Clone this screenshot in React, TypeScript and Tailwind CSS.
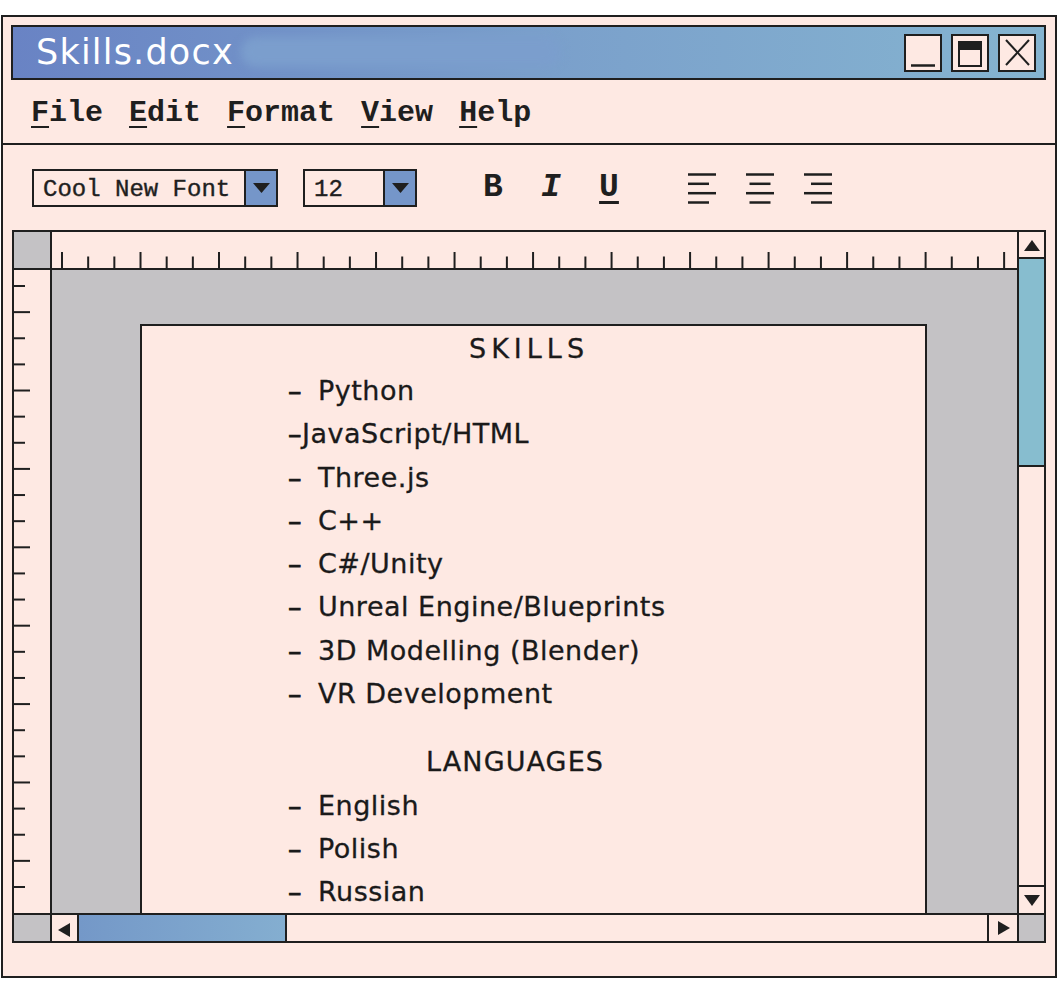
const ink = "#1f1f1f";

const skills = [
  "– Python",
  "–JavaScript/HTML",
  "– Three.js",
  "– C++",
  "– C#/Unity",
  "– Unreal Engine/Blueprints",
  "– 3D Modelling (Blender)",
  "– VR Development",
];

const languages = ["– English", "– Polish", "– Russian"];

const menu = ["File", "Edit", "Format", "View", "Help"];

function Arrow({ dir, className }: { dir: "up" | "down" | "left" | "right"; className?: string }) {
  const pts = {
    up: "0,11 8,0 16,11",
    down: "0,0 16,0 8,11",
    left: "12,0 12,14 0,7",
    right: "0,0 12,7 0,14",
  }[dir];
  const size = dir === "up" || dir === "down" ? { w: 16, h: 11 } : { w: 12, h: 14 };
  return (
    <svg width={size.w} height={size.h} viewBox={`0 0 ${size.w} ${size.h}`} className={className}>
      <polygon points={pts} fill={ink} />
    </svg>
  );
}

function AlignIcon({ kind }: { kind: "left" | "center" | "right" }) {
  const ys = [1.5, 10.8, 20.2, 29.5];
  const short = (y: number, i: number) => {
    if (i % 2 === 0) return <line key={y} x1="0" y1={y} x2="28" y2={y} />;
    if (kind === "left") return <line key={y} x1="0" y1={y} x2="21" y2={y} />;
    if (kind === "center") return <line key={y} x1="3.5" y1={y} x2="24.5" y2={y} />;
    return <line key={y} x1="7" y1={y} x2="28" y2={y} />;
  };
  return (
    <svg width="28" height="31" viewBox="0 0 28 31" stroke={ink} strokeWidth="2.5">
      {ys.map((y, i) => short(y, i))}
    </svg>
  );
}

function HRuler() {
  const ticks = Array.from({ length: 37 }, (_, i) => i);
  return (
    <svg width="965" height="36" viewBox="0 0 965 36">
      {ticks.map((i) => {
        const x = 10 + i * 26.17;
        const long = i % 3 === 0;
        return <line key={i} x1={x} y1={long ? 20 : 24.5} x2={x} y2={36} stroke={ink} strokeWidth="2" />;
      })}
    </svg>
  );
}

function VRuler() {
  const ticks = Array.from({ length: 24 }, (_, i) => i);
  return (
    <svg width="36" height="643" viewBox="0 0 36 643">
      {ticks.map((i) => {
        const y = 16 + i * 26.13;
        const long = i % 3 === 1;
        return <line key={i} x1={0} y1={y} x2={long ? 16 : 11} y2={y} stroke={ink} strokeWidth="2" />;
      })}
    </svg>
  );
}

function Select({ value, width }: { value: string; width: string }) {
  return (
    <div className={`flex h-[38px] border-2 border-[#1f1f1f] bg-[#fee9e3] ${width}`}>
      <div className="flex flex-1 items-center pl-[9px] pt-[4px] font-['Liberation_Mono',monospace] text-[24px] text-[#1f1f1f] [-webkit-text-stroke:0.4px_#1f1f1f]">
        {value}
      </div>
      <div className="flex w-[32px] items-center justify-center border-l-2 border-[#1f1f1f] bg-[#7596c9]">
        <svg width="17" height="10" viewBox="0 0 17 10">
          <polygon points="0,0 17,0 8.5,10" fill={ink} />
        </svg>
      </div>
    </div>
  );
}

function Line({ text }: { text: string }) {
  const spaced = text[1] === " ";
  return (
    <div className="leading-[43.3px]">
      <span className={`inline-block [-webkit-text-stroke:0.8px_#1a1a1a] ${spaced ? "w-[30px]" : ""}`}>{text[0]}</span>
      {text.slice(spaced ? 2 : 1)}
    </div>
  );
}

export default function App() {
  return (
    <div className="h-[983px] w-[1059px] overflow-hidden bg-white pt-[15px] pl-[1px]">
      <div className="flex h-[963px] w-[1056px] flex-col border-2 border-[#1f1f1f] bg-[#fee9e3]">
        {/* title bar */}
        <div className="relative mt-[8px] ml-[8px] mr-[9px] flex h-[55px] shrink-0 items-center border-2 border-[#1f1f1f] bg-linear-to-r from-[#6983c4] via-[#7a9fcb] to-[#85b4d0]">
          <div className="absolute left-[228px] top-[10px] h-[30px] w-[320px] rounded-full bg-[#7b9ecd] blur-[4px]" />
          <span className="relative pl-[23px] font-['DejaVu_Sans',sans-serif] text-[35px] leading-none tracking-[1.2px] text-white">
            Skills.docx
          </span>
          <div className="ml-auto mr-[8px] flex gap-[9px]">
            <div className="h-[38px] w-[38px] border-2 border-[#1f1f1f] bg-[#fee9e3]">
              <svg width="34" height="34" viewBox="0 0 34 34">
                <line x1="5" y1="29.5" x2="29" y2="29.5" stroke={ink} strokeWidth="2.5" />
              </svg>
            </div>
            <div className="h-[38px] w-[38px] border-2 border-[#1f1f1f] bg-[#fee9e3]">
              <svg width="34" height="34" viewBox="0 0 34 34">
                <rect x="6" y="6" width="22" height="24" fill="none" stroke={ink} strokeWidth="2" />
                <rect x="6" y="6" width="22" height="8" fill={ink} />
              </svg>
            </div>
            <div className="h-[38px] w-[38px] border-2 border-[#1f1f1f] bg-[#fee9e3]">
              <svg width="34" height="34" viewBox="0 0 34 34">
                <line x1="6" y1="4" x2="29" y2="29" stroke={ink} strokeWidth="2" />
                <line x1="29" y1="4" x2="6" y2="29" stroke={ink} strokeWidth="2" />
              </svg>
            </div>
          </div>
        </div>

        {/* menu */}
        <div className="flex h-[65px] shrink-0 items-center gap-[26px] border-b-2 border-[#1f1f1f] pl-[28px] pt-[3px] font-['Liberation_Mono',monospace] text-[30px] font-bold text-[#1f1f1f]">
          {menu.map((m) => (
            <span key={m}>
              <span className="underline decoration-2 underline-offset-[5px]">{m[0]}</span>
              {m.slice(1)}
            </span>
          ))}
        </div>

        {/* toolbar */}
        <div className="flex h-[85px] shrink-0 items-center pl-[29px] font-['Liberation_Mono',monospace] text-[#1f1f1f]">
          <Select value="Cool New Font" width="w-[246px]" />
          <div className="ml-[25px]">
            <Select value="12" width="w-[114px]" />
          </div>
          <span className="ml-[61px] w-[30px] text-center text-[33px] font-bold leading-none">B</span>
          <span className="ml-[28px] w-[30px] text-center text-[33px] font-bold italic leading-none">I</span>
          <span className="ml-[28px] w-[30px] text-center text-[33px] font-bold leading-none underline decoration-[2.5px] underline-offset-[5px]">
            U
          </span>
          <div className="ml-[64px] mt-[2px]">
            <AlignIcon kind="left" />
          </div>
          <div className="ml-[30px] mt-[2px]">
            <AlignIcon kind="center" />
          </div>
          <div className="ml-[30px] mt-[2px]">
            <AlignIcon kind="right" />
          </div>
        </div>

        {/* editor */}
        <div className="mx-[9px] grid h-[713px] shrink-0 grid-cols-[36px_965px_25px] grid-rows-[36px_643px_26px] gap-[2px] border-2 border-[#1f1f1f] bg-[#1f1f1f]">
          <div className="bg-[#c4c2c5]" />
          <div className="bg-[#fee9e3]">
            <HRuler />
          </div>
          <div className="row-span-2 flex flex-col gap-[2px] bg-[#1f1f1f]">
            <div className="flex h-[25px] items-start justify-center bg-[#fee9e3] pt-[8px]">
              <Arrow dir="up" />
            </div>
            <div className="h-[206px] bg-[#87bdcf]" />
            <div className="flex-1 bg-[#fee9e3]" />
            <div className="flex h-[26px] items-start justify-center bg-[#fee9e3] pt-[8px]">
              <Arrow dir="down" />
            </div>
          </div>
          <div className="bg-[#fee9e3]">
            <VRuler />
          </div>
          <div className="overflow-hidden bg-[#c4c2c5] pl-[88px] pr-[90px] pt-[54px]">
            <div className="h-[640px] border-2 border-[#1f1f1f] bg-[#fee9e3] pl-[146px] pt-[3px] font-['DejaVu_Sans',sans-serif] text-[27px] tracking-[0.5px] text-[#1a1a1a] [-webkit-text-stroke:0.3px_#1a1a1a]">
              <div className="ml-[181px] leading-[40px] tracking-[5px]">SKILLS</div>
              {skills.map((s) => (
                <Line key={s} text={s} />
              ))}
              <div className="mt-[25px] ml-[138px] leading-[43.3px] tracking-[1.1px]">LANGUAGES</div>
              {languages.map((s) => (
                <Line key={s} text={s} />
              ))}
            </div>
          </div>
          <div className="bg-[#c4c2c5]" />
          <div className="flex gap-[2px] bg-[#1f1f1f]">
            <div className="flex w-[25px] items-start justify-start bg-[#fee9e3] pl-[6px] pt-[8px]">
              <Arrow dir="left" />
            </div>
            <div className="w-[206px] bg-linear-to-r from-[#7498c8] to-[#84aed0]" />
            <div className="flex-1 bg-[#fee9e3]" />
            <div className="flex w-[28px] items-start justify-start bg-[#fee9e3] pl-[9px] pt-[6px]">
              <Arrow dir="right" />
            </div>
          </div>
          <div className="bg-[#c4c2c5]" />
        </div>
      </div>
    </div>
  );
}
